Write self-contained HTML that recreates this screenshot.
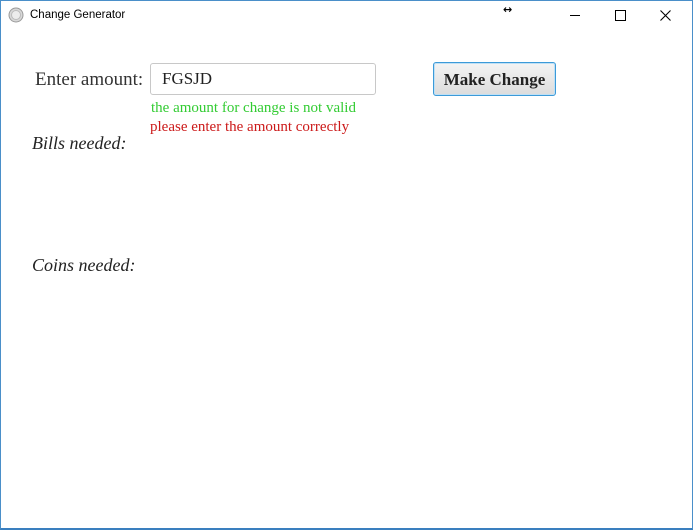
<!DOCTYPE html>
<html><head><meta charset="utf-8"><style>
html,body{margin:0;padding:0;background:#fff;}
body{width:693px;height:530px;position:relative;overflow:hidden;font-family:"Liberation Serif",serif;}
.frame{position:absolute;left:0;top:0;width:691px;height:527px;border:1px solid #4a8fc9;border-bottom:2px solid #3a7fbf;}
.t{position:absolute;white-space:nowrap;}
</style></head><body>
<div class="frame"></div>
<svg style="position:absolute;left:8px;top:7px" width="16" height="16"><circle cx="8" cy="8" r="7" fill="#d8d8d8" stroke="#9a9a9a"/><circle cx="8" cy="8" r="4.5" fill="#ececec" stroke="#bbb"/></svg>
<div class="t" style="left:30px;top:9px;font:11.5px 'Liberation Sans',sans-serif;color:#000">Change Generator</div>
<div class="t" style="left:503px;top:3px;font:bold 11px 'DejaVu Sans',sans-serif">↔</div>
<div style="position:absolute;left:570px;top:15px;width:10px;height:1px;background:#000"></div>
<div style="position:absolute;left:615px;top:10px;width:9px;height:9px;border:1px solid #000"></div>
<svg style="position:absolute;left:660px;top:10px" width="11" height="11"><path d="M0.5 0.5L10.5 10.5M10.5 0.5L0.5 10.5" stroke="#000" stroke-width="1.1"/></svg>
<div class="t" style="left:35px;top:69px;font:19px 'Liberation Serif',serif;color:#333">Enter amount:</div>
<div style="position:absolute;left:150px;top:63px;width:224px;height:30px;border:1px solid #c8c8c8;border-radius:3px;background:#fff"></div>
<div class="t" style="left:162px;top:69px;font:17px 'Liberation Serif',serif;color:#222">FGSJD</div>
<div style="position:absolute;left:433px;top:62px;width:121px;height:32px;border:1px solid #3c9ad8;border-radius:3px;background:linear-gradient(#f4f4f4,#dcdcdc);box-shadow:inset 0 0 0 1px #bfe0f5"></div>
<div class="t" style="left:433px;top:70px;width:123px;text-align:center;font:bold 17px 'Liberation Serif',serif;color:#222">Make Change</div>
<div class="t" style="left:151px;top:100px;font:15px 'Liberation Serif',serif;color:#33cc33">the amount for change is not valid</div>
<div class="t" style="left:150px;top:119px;font:15px 'Liberation Serif',serif;color:#cc1a1a">please enter the amount correctly</div>
<div class="t" style="left:32px;top:133px;font:italic 18px 'Liberation Serif',serif;color:#222">Bills needed:</div>
<div class="t" style="left:32px;top:255px;font:italic 18px 'Liberation Serif',serif;color:#222">Coins needed:</div>
</body></html>
